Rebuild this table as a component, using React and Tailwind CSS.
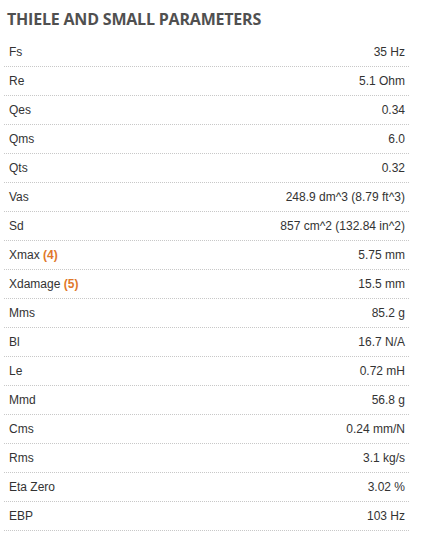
const ROWS = [
  ['Fs', '35 Hz'],
  ['Re', '5.1 Ohm'],
  ['Qes', '0.34'],
  ['Qms', '6.0'],
  ['Qts', '0.32'],
  ['Vas', '248.9 dm^3 (8.79 ft^3)'],
  ['Sd', '857 cm^2 (132.84 in^2)'],
  ['Xmax', '5.75 mm', '(4)'],
  ['Xdamage', '15.5 mm', '(5)'],
  ['Mms', '85.2 g'],
  ['Bl', '16.7 N/A'],
  ['Le', '0.72 mH'],
  ['Mmd', '56.8 g'],
  ['Cms', '0.24 mm/N'],
  ['Rms', '3.1 kg/s'],
  ['Eta Zero', '3.02 %'],
  ['EBP', '103 Hz'],
];

export default function App() {
  return (
    <div className="w-[427px] h-[535px] bg-white overflow-hidden">
      <h2 className="pl-[7px] pt-[8px] h-[38px] text-[16px] leading-[22px] font-bold tracking-[-0.2px] text-[#505050] font-['Open_Sans',sans-serif]">
        THIELE AND SMALL PARAMETERS
      </h2>
      <div className="ml-[4px] w-[405px] font-['Liberation_Sans',Arial,sans-serif] text-[12px] text-[#333]">
        {ROWS.map(([label, value, note]) => (
          <div
            key={label}
            className="flex items-center justify-between h-[29px] pl-[5px] pr-[4px] border-b border-dotted border-[#c8c8c8]"
          >
            <span>
              {label}
              {note && <span className="text-[#e0782a] font-bold"> {note}</span>}
            </span>
            <span>{value}</span>
          </div>
        ))}
      </div>
    </div>
  );
}
